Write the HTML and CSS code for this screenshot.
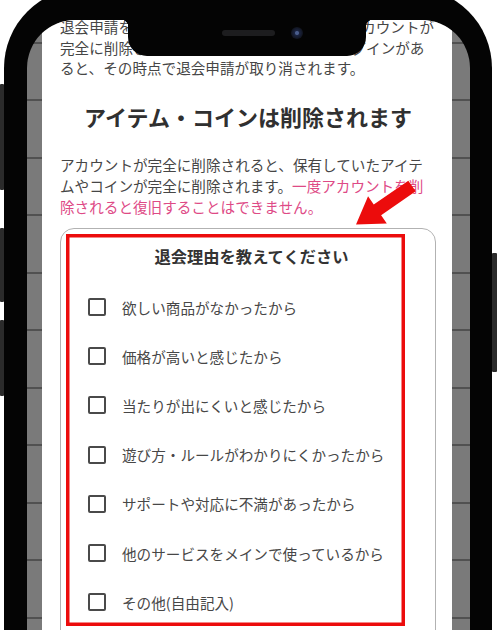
FILE: index.html
```html
<!DOCTYPE html>
<html lang="ja">
<head>
<meta charset="utf-8">
<title>退会手続き</title>
<link rel="stylesheet" href="styles.css">
</head>
<body>
<div class="stage">
  <span class="side-btn side-btn--switch"></span>
  <span class="side-btn side-btn--vol-up"></span>
  <span class="side-btn side-btn--vol-down"></span>
  <span class="side-btn side-btn--power"></span>

  <div class="device">
    <div class="notch">
      <span class="speaker"></span>
      <span class="camera"></span>
    </div>

    <div class="screen">
      <main class="page">
        <p class="intro">退会申請をしてから180日間経過するまではアカウントが完全に削除されません。この期間中に再度ログインがあると、その時点で退会申請が取り消されます。</p>

        <h2 class="section-title">アイテム・コインは削除されます</h2>

        <p class="notice">アカウントが完全に削除されると、保有していたアイテムやコインが完全に削除されます。<span class="warn">一度アカウントを削除されると復旧することはできません。</span></p>

        <section class="reason-card">
          <h3 class="reason-title">退会理由を教えてください</h3>
          <ul class="reason-list">
            <li><label class="reason"><input class="reason-check" type="checkbox"><span>欲しい商品がなかったから</span></label></li>
            <li><label class="reason"><input class="reason-check" type="checkbox"><span>価格が高いと感じたから</span></label></li>
            <li><label class="reason"><input class="reason-check" type="checkbox"><span>当たりが出にくいと感じたから</span></label></li>
            <li><label class="reason"><input class="reason-check" type="checkbox"><span>遊び方・ルールがわかりにくかったから</span></label></li>
            <li><label class="reason"><input class="reason-check" type="checkbox"><span>サポートや対応に不満があったから</span></label></li>
            <li><label class="reason"><input class="reason-check" type="checkbox"><span>他のサービスをメインで使っているから</span></label></li>
            <li><label class="reason"><input class="reason-check" type="checkbox"><span>その他(自由記入)</span></label></li>
          </ul>
        </section>
      </main>
    </div>
  </div>

  <!-- red callout drawn over the form -->
  <svg class="callout" width="498" height="630" viewBox="0 0 498 630" aria-hidden="true">
    <rect x="67.75" y="235.75" width="335.5" height="388.5" fill="none" stroke="#ec0c0c" stroke-width="3.5"/>
    <polygon transform="translate(412 186) rotate(145.4)" points="0,-6.5 42,-6.5 42,-16.5 68,0 42,16.5 42,6.5 0,6.5" fill="#ec0c0c"/>
  </svg>
</div>
</body>
</html>
```

FILE: styles.css
```css
* {
  box-sizing: border-box;
}

html,
body {
  margin: 0;
  background: #ffffff;
}

body {
  font-family: "Noto Sans CJK JP", "Noto Sans", sans-serif;
  color: #464646;
}

.stage {
  position: relative;
  width: 498px;
  height: 630px;
  overflow: hidden;
}

/* hardware buttons on the frame edges */
.side-btn {
  position: absolute;
  background: #2b2b2b;
  border-radius: 1px;
}

.side-btn--switch {
  left: 0;
  top: 84px;
  width: 4px;
  height: 106px;
}

.side-btn--vol-up {
  left: 0;
  top: 228px;
  width: 4px;
  height: 74px;
}

.side-btn--vol-down {
  left: 0;
  top: 320px;
  width: 4px;
  height: 76px;
}

.side-btn--power {
  left: 492px;
  top: 253px;
  width: 5px;
  height: 119px;
}

/* phone body */
.device {
  position: relative;
  margin: -12px 0 0 4px;
  width: 488px;
  height: 720px;
  padding: 32px 22px 0 23px;
  background: #040404;
  border-radius: 80px 80px 0 0;
}

.notch {
  position: absolute;
  left: 124px;
  top: 0;
  width: 238px;
  height: 68px;
  background: #040404;
  border-radius: 0 0 19px 19px;
  z-index: 2;
}

.notch::before,
.notch::after {
  content: "";
  position: absolute;
  top: 32px;
  width: 7px;
  height: 7px;
}

.notch::before {
  left: -7px;
  background: radial-gradient(circle at 0 100%, transparent 7px, #040404 7.5px);
}

.notch::after {
  right: -7px;
  background: radial-gradient(circle at 100% 100%, transparent 7px, #040404 7.5px);
}

.speaker {
  position: absolute;
  left: 94px;
  top: 42px;
  width: 53px;
  height: 6px;
  border-radius: 3px;
  background: #1d1d1f;
}

.camera {
  position: absolute;
  left: 163px;
  top: 39px;
  width: 12px;
  height: 12px;
  border-radius: 50%;
  background: radial-gradient(circle at 50% 50%, #4a5d8c 0 1.5px, #1b2440 2.5px, #10131d 6px);
}

/* display: grey ruled backdrop with the white page column */
.screen {
  display: flex;
  height: 100%;
  padding: 0 18px 0 15px;
  border-radius: 48px 48px 0 0;
  overflow: hidden;
  background-color: #7a7a7a;
  background-image: repeating-linear-gradient(
    to bottom,
    transparent 0,
    transparent 21.5px,
    #515151 21.5px,
    #515151 23.5px,
    transparent 23.5px,
    transparent 57.5px
  );
}

.page {
  flex: 1;
  background: #ffffff;
  padding: 0 16px 0 18px;
  font-size: 14.6px;
}

.intro {
  margin: -3px 0 0;
  line-height: 20.5px;
}

.section-title {
  margin: 22px 0 0;
  font-size: 22px;
  line-height: 30px;
  font-weight: 700;
  text-align: center;
  color: #303030;
}

.notice {
  margin: 23px 0 0;
  line-height: 21px;
}

.warn {
  color: #de4a86;
}

/* withdrawal reason form */
.reason-card {
  margin-top: 11px;
  padding: 15px 20px 40px 27px;
  border: 1px solid #b2b2b2;
  border-radius: 14px;
}

.reason-title {
  margin: 0;
  font-size: 16.3px;
  line-height: 24px;
  font-weight: 700;
  text-align: center;
  color: #333333;
}

.reason-list {
  list-style: none;
  margin: 15px 0 0;
  padding: 0;
}

.reason {
  display: flex;
  align-items: center;
  gap: 16px;
  height: 49.2px;
  line-height: 21px;
  color: #474747;
}

.reason-check {
  appearance: none;
  -webkit-appearance: none;
  flex: none;
  margin: 0;
  width: 18px;
  height: 18px;
  border: 2px solid #4a4a4a;
  border-radius: 2px;
  background: #ffffff;
}

.callout {
  position: absolute;
  left: 0;
  top: 0;
  z-index: 5;
  pointer-events: none;
}
```
